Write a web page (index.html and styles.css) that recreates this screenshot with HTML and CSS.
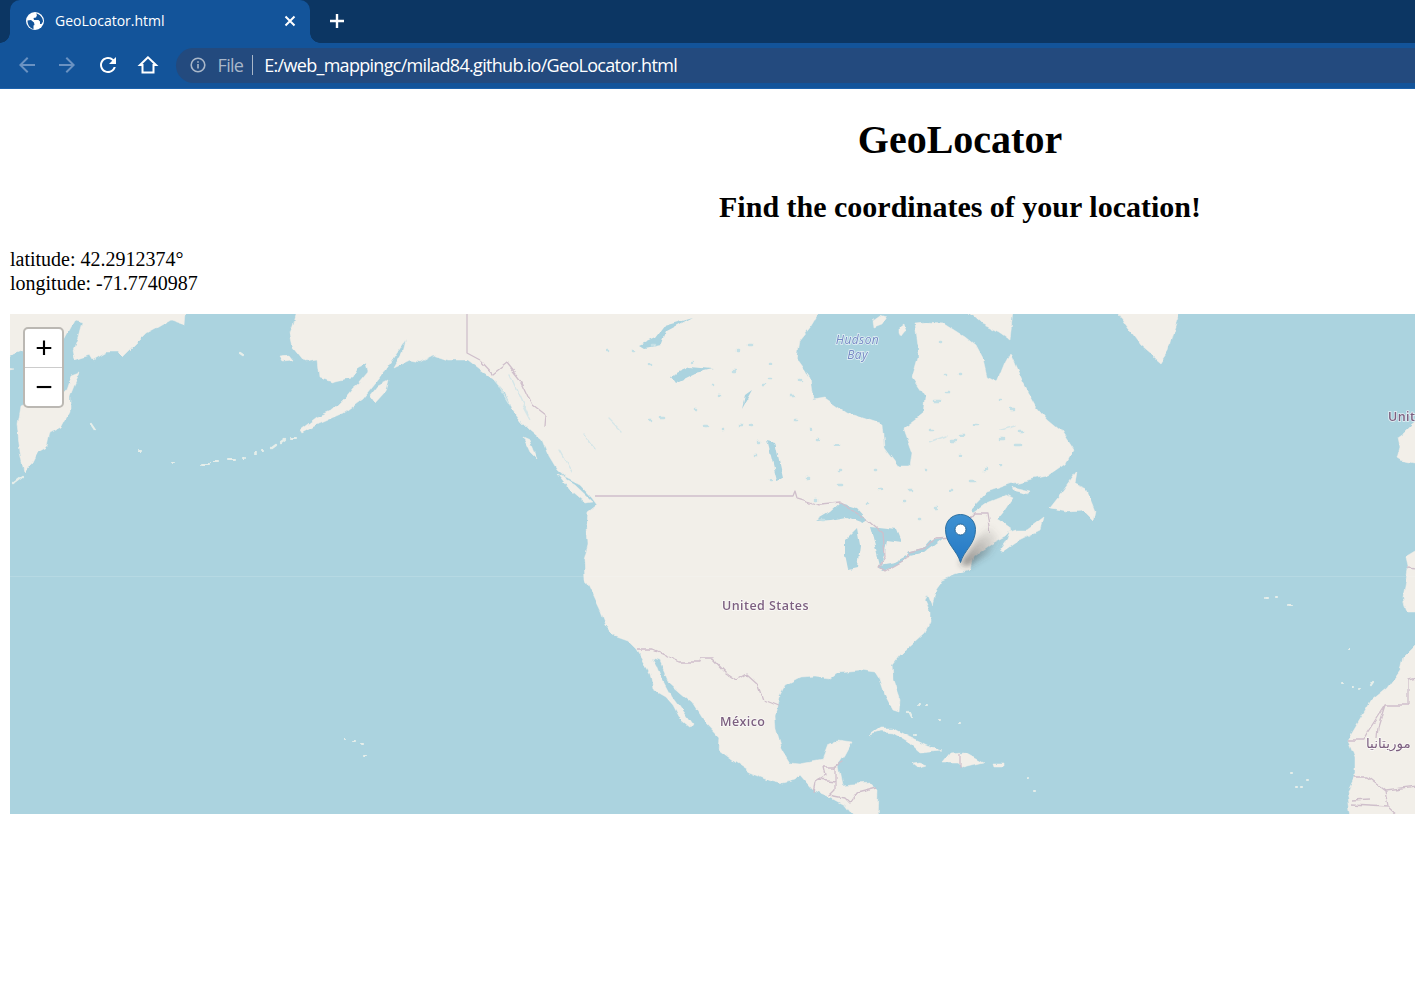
FILE: index.html
```html
<!DOCTYPE html>
<html lang="en">
<head>
  <meta charset="UTF-8">
  <meta name="viewport" content="width=device-width, initial-scale=1.0">
  <title>GeoLocator</title>
  <link rel="stylesheet" href="styles.css">
</head>
<body>

  <div class="browser">
    <div class="tabstrip">
      <div class="tab">
        <svg class="favicon" viewBox="0 0 18 18">
          <circle cx="9" cy="9" r="9" fill="#fff"/>
          <path class="favicon-land" d="M1.5 8.5 5 8l3 2.5.5 2.5-1 .5v3.5C4 16.5 1.5 13 1.5 8.5zM10 1.5l1 1.5-1 2.5-2.5.5L8 8h4.5l1.5 1.5v2.5h1.5L17 9.5c0-3.5-3-7.5-7-8z"/>
        </svg>
        <span class="tab-title">GeoLocator.html</span>
        <svg class="tab-close" viewBox="0 0 12 12"><path d="M1.5 1.5l9 9M10.5 1.5l-9 9"/></svg>
      </div>
      <svg class="new-tab" viewBox="0 0 16 16"><path d="M8 1v14M1 8h14"/></svg>
    </div>
    <div class="toolbar">
      <svg class="tool tool-off" viewBox="0 0 24 24"><path d="M20 11H7.8l5.6-5.6L12 4l-8 8 8 8 1.4-1.4L7.8 13H20z"/></svg>
      <svg class="tool tool-off" viewBox="0 0 24 24"><path d="M4 11h12.2l-5.6-5.6L12 4l8 8-8 8-1.4-1.4 5.6-5.6H4z"/></svg>
      <svg class="tool" viewBox="0 0 24 24"><path d="M17.65 6.35A7.958 7.958 0 0012 4c-4.42 0-7.99 3.58-7.99 8s3.57 8 7.99 8c3.73 0 6.84-2.55 7.73-6h-2.08A5.99 5.99 0 0112 18c-3.31 0-6-2.69-6-6s2.69-6 6-6c1.66 0 3.14.69 4.22 1.78L13 11h7V4l-2.35 2.35z"/></svg>
      <svg class="tool tool-line" viewBox="0 0 24 24"><path d="M12 4.3 4 12h2.5v7.5h11V12H20z"/></svg>
      <div class="omnibox">
        <svg class="info" viewBox="0 0 16 16">
          <circle cx="8" cy="8" r="6.8"/>
          <path d="M8 7v4.5M8 4.2v1.6"/>
        </svg>
        <span class="scheme">File</span>
        <span class="divider"></span>
        <span class="url">E:/web_mappingc/milad84.github.io/GeoLocator.html</span>
      </div>
    </div>
  </div>

  <main class="page">
    <div class="titles">
      <h1>GeoLocator</h1>
      <h2>Find the coordinates of your location!</h2>
    </div>

    <p class="coords">latitude: 42.2912374°<br>longitude: -71.7740987</p>

    <div class="map">
      <svg class="map-svg" viewBox="10 314 1405 500">
        <defs>
          <filter id="coast" filterUnits="userSpaceOnUse" x="0" y="295" width="1430" height="535" color-interpolation-filters="sRGB">
            <feTurbulence type="fractalNoise" baseFrequency="0.07" numOctaves="3" seed="7" result="noise"/>
            <feDisplacementMap in="SourceGraphic" in2="noise" scale="6" xChannelSelector="R" yChannelSelector="G"/>
            <feGaussianBlur stdDeviation="0.6"/>
          </filter>
          <filter id="soft" filterUnits="userSpaceOnUse" x="0" y="295" width="1430" height="535">
            <feGaussianBlur stdDeviation="0.45"/>
          </filter>
          <filter id="softer" x="-40%" y="-40%" width="180%" height="180%"><feGaussianBlur stdDeviation="3"/></filter>
          <linearGradient id="pin" x1="0" y1="0" x2="0" y2="1">
            <stop offset="0" stop-color="#3f92d2"/>
            <stop offset="1" stop-color="#2478c4"/>
          </linearGradient>
          <linearGradient id="pinshadow" x1="0" y1="1" x2="1" y2="0">
            <stop offset="0" stop-color="#333" stop-opacity=".6"/>
            <stop offset="1" stop-color="#666" stop-opacity="0"/>
          </linearGradient>
        </defs>

        <rect class="water" x="10" y="314" width="1405" height="500"/>

        <g filter="url(#coast)">
          <!-- asia -->
          <path class="land" d="M0 300H187L185 325 170 320 158 327 147 333 135 345 123 357 118 352 107 352 93 360 90 355 75 360 73 350 78 337 82 322 75 320 64 340 24 350 0 359Z"/>
          <path class="land" d="M67 390 72 375 80 372 74 385 70 395 70 412 62 427 50 433 47 447 38 452 33 462 24 473 20 453 17 423 20 405 30 400 45 395Z"/>
          <path class="land" d="M0 367 14 369 0 372Z"/>

          <!-- north america, hudson bay cut into the outline -->
          <path class="land" d="M300 300 293 325 290 333 293 347 305 362 318 360 320 378 332 382 340 380 352 378 358 368 366 364 368 372 358 384 353 388 345 398 333 410 317 417 300 430 302 433 320 423 343 413 363 398 380 377 393 358 405 340 402 352 393 368 410 360 420 362 433 355 448 360 467 360 480 370 492 378 505 393 513 410 522 422 530 430 542 440 548 455 557 470 566 478 580 485 592 498 597 505 588 512 587 525 588 545 584 560 585 580 593 597 600 612 605 625 613 635 627 640 637 650 643 660 650 672 653 690 665 697 672 705 680 720 690 728 692 725 683 712 672 697 663 680 657 665 653 658 660 660 670 683 680 692 693 703 705 722 720 738 719 750 735 762 750 772 770 780 783 783 795 780 800 775 813 790 830 797 845 805 860 825 877 825 878 790 870 783 853 784 842 785 838 765 845 755 852 742 838 740 828 745 822 760 800 764 790 763 782 750 776 730 775 715 779 697 785 685 800 677 815 676 830 678 838 672 860 670 875 672 880 680 885 695 893 710 899 712 900 700 893 680 892 665 900 655 913 643 925 632 930 622 930 612 925 600 928 595 932 605 936 590 943 580 955 575 970 570 973 557 990 545 1005 537 1012 530 1005 525 997 520 1005 510 1013 498 1007 495 987 503 973 513 970 510 987 492 1013 483 1047 476 1066 463 1073 450 1060 430 1048 420 1035 405 1023 383 1015 365 1010 353 1005 362 997 382 987 377 983 360 975 345 965 337 943 323 925 322 915 323 918 345 918 357 912 378 925 397 923 413 903 428 912 453 910 467 900 467 885 447 883 425 847 413 825 398 813 400 810 378 797 360 800 340 812 325 827 300Z"/>
          <path class="land" d="M955 300 980 323 1000 333 1010 340 1014 300Z"/>
          <path class="land" d="M873 320 880 315 887 317 882 325 874 328ZM900 327 904 324 906 332 902 337 900 333Z"/>
          <path class="land" d="M1108 300 1125 325 1140 345 1160 362 1168 350 1172 335 1184 300Z"/>
          <path class="land" d="M1000 550 1007 540 1010 532 1016 530 1027 530 1043 518 1040 530 1020 540 1003 552Z"/>
          <path class="land" d="M1050 508 1064 490 1077 472 1075 485 1087 490 1095 510 1093 520 1083 510 1067 511Z"/>
          <path class="land" d="M1013 487 1030 491 1028 494 1015 491Z"/>
          <path class="land" d="M523 437 530 440 538 460 530 452ZM558 475 575 485 593 502 585 503 570 490Z"/>
          <path class="land" d="M370 395 378 385 388 380 385 392 375 403ZM280 356 288 355 292 360 283 361Z"/>

          <!-- caribbean -->
          <path class="land" d="M870 735 880 728 893 728 910 737 927 745 942 750 920 752 910 743 893 733 880 732ZM942 763 950 753 965 752 983 762 963 767 957 763ZM913 764 920 763 927 766 918 768ZM993 763 1003 763 1003 766 994 766Z"/>

          <!-- europe, africa -->
          <path class="land" d="M1412 425 1425 415V465L1400 460 1397 458 1400 447 1398 437 1405 432Z"/>
          <path class="land" d="M1425 545 1405 557 1408 570 1403 597 1407 612H1425Z"/>
          <path class="land" d="M1425 635 1403 657 1400 670 1388 687 1372 700 1358 723 1348 740 1355 757 1355 773 1347 790 1352 825H1425Z"/>

          <!-- lakes -->
          <path class="lake" d="M815 521 830 512 840 503 857 508 868 520 863 523 847 517 830 520ZM845 540 857 528 860 545 857 568 848 570 845 555ZM870 527 897 530 902 542 887 540 885 553 880 565 875 545ZM878 565 895 562 908 555 905 560 890 568 882 571ZM907 552 923 548 930 540 945 537 925 552 910 556ZM767 440 775 442 783 478 777 480ZM670 376 690 367 713 369 695 373 675 383ZM640 345 655 338 665 325 693 317 665 332 660 345 645 348ZM745 395 752 390 742 408Z"/>
          <path class="rivers" d="M495 380l15 25M510 375l18 40M530 420l-8-15M585 435l10 14M610 420l12 12M560 450l12 22M1000 430l15-4M930 442l16-6"/>
          <path class="dots" d="M607 352h1M633 352h1M652 345h2M650 364h1M692 362h1M712 385h1M720 395h2M748 345h3M738 350h1M733 372h1M763 385h2M770 365h1M768 378h2M790 396h3M800 380h1M650 420h2M660 416h4M695 410h1M705 425h3M722 430h1M740 425h2M752 425h1M758 442h2M755 455h2M770 480h1M795 420h2M810 430h1M818 440h1M836 445h3M840 470h1M838 485h4M808 478h1M815 500h1M822 520h2M935 400h5M945 392h3M960 375h1M930 430h3M950 440h6M960 435h4M975 425h3M1000 440h4M1015 445h5M1020 432h3M985 470h1M970 480h5M950 490h2M1000 465h1M960 455h1M925 470h1M910 490h3M905 502h1M920 520h1M935 508h2M865 503h1M875 470h1M880 490h2M940 342h1M945 375h1M1000 400h1M1010 410h4"/>

          <!-- islands and island chains -->
          <path class="isles" d="M13 483l8-6M90 423l4 6M138 452h2M172 462h1M203 464h6M214 462h4M228 460h8M243 458h1M255 454h1M262 451h1M272 448l4-3M281 443l4-3M290 437h6M240 353l3 2M360 745h1M364 755h2M346 738h1M354 741h1M1265 598h2M1276 597h1M1288 606h3M1349 649h1M1342 683h1M1352 687h1M1359 689h1M1371 685l2-3M1291 773h1M1308 780h1M1302 787h1M1296 788h1M960 723h1M940 720h1M925 706h1M908 712l3 6M915 735h1M918 703h1M1028 778h1M1033 790h1"/>

          <!-- borders that follow the land -->
          <path class="border" d="M480 360 493 374 507 363 522 382 533 405 546 415 545 427"/>
          <path class="border" d="M797 498 820 505 840 503 868 520 883 533 885 557 878 567 885 571 908 558 910 552 925 548 935 538 955 537 975 513 987 513 990 533"/>
          <path class="border" d="M638 650H653L680 662H700L701 658H713L727 673 737 680 747 674 757 683 763 700 778 706"/>
          <path class="border" d="M823 767H835L843 762 835 767V782L818 780 825 776 823 767M818 780 815 782 813 792M835 782 835 790 830 795 845 798 850 803 857 793 877 788M960 753V767"/>
          <path class="border" d="M1348 740H1363L1367 733 1385 705H1408V680L1425 676M1385 705 1378 727 1377 738M1353 777H1368L1385 790 1425 785M1385 790 1388 807 1408 825M1352 800 1370 799M1352 805 1388 807M1407 567 1425 569"/>
        </g>

        <g filter="url(#soft)">
          <path class="border" d="M467 300V353L480 360M595 496H793L795 491 797 498"/>
          <rect class="seam" x="10" y="576" width="1405" height="1"/>
          <text class="label label-sea" x="857.5" y="344" text-anchor="middle">Hudson</text>
          <text class="label label-sea" x="857.5" y="359" text-anchor="middle">Bay</text>
          <text class="label label-us" x="722" y="610">United States</text>
          <text class="label" x="720" y="726">México</text>
          <text class="label" x="1388" y="421">Unit</text>
          <text class="label label-ar" x="1366" y="748">موريتانيا</text>
        </g>

        <!-- marker -->
        <path d="M960 564 976 540 990 527 999 538 988 554 968 566Z" fill="url(#pinshadow)" filter="url(#softer)"/>
        <path class="pin" d="M960.5 562.5C957 550 945.5 544 945.5 529.5C945.5 521 952 514.5 960.5 514.5C969 514.5 975.5 521 975.5 529.5C975.5 544 964 550 960.5 562.5Z"/>
        <circle class="pin-hole" cx="960.5" cy="529.5" r="5.5"/>
      </svg>

      <div class="zoom">
        <a class="zoom-btn" href="#">+</a>
        <a class="zoom-btn" href="#">−</a>
      </div>
    </div>
  </main>

</body>
</html>
```

FILE: styles.css
```css
* {
  box-sizing: border-box;
}

html,
body {
  margin: 0;
  padding: 0;
  background: #fff;
  overflow-x: hidden;
}

body {
  font-family: "Liberation Serif", "Times New Roman", serif;
  color: #000;
}

/* browser chrome */

.browser {
  height: 89px;
  background: #13549a;
  border-bottom: 1px solid #1d62ac;
  font-family: "Open Sans", "Noto Sans", sans-serif;
}

.tabstrip {
  height: 43px;
  background: #0c3663;
  display: flex;
  align-items: flex-end;
  padding-left: 10px;
}

.tab {
  position: relative;
  width: 300px;
  height: 43px;
  background: #13549a;
  border-radius: 10px 10px 0 0;
  display: flex;
  align-items: center;
  padding: 0 14px 2px 16px;
  color: #fff;
}

.tab::before,
.tab::after {
  content: "";
  position: absolute;
  bottom: 0;
  width: 10px;
  height: 10px;
}

.tab::before {
  left: -10px;
  background: radial-gradient(circle at 0 0, transparent 9.5px, #13549a 10px);
}

.tab::after {
  right: -10px;
  background: radial-gradient(circle at 100% 0, transparent 9.5px, #13549a 10px);
}

.favicon {
  width: 18px;
  height: 18px;
  flex: none;
}

.favicon-land {
  fill: #13549a;
}

.tab-title {
  flex: 1;
  margin-left: 11px;
  font-size: 14px;
}

.tab-close {
  width: 12px;
  height: 12px;
  margin-bottom: -1px;
  fill: none;
  stroke: #fff;
  stroke-width: 2;
}

.new-tab {
  width: 16px;
  height: 16px;
  margin: 0 0 14px 19px;
  fill: none;
  stroke: #fff;
  stroke-width: 2.4;
}

.toolbar {
  height: 45px;
  display: flex;
  align-items: center;
  padding: 0 0 1px 15px;
  gap: 16.4px;
}

.tool {
  width: 24px;
  height: 24px;
  flex: none;
  fill: #fff;
}

.tool-off {
  fill: #6a92c2;
}

.tool-line {
  fill: none;
  stroke: #fff;
  stroke-width: 2;
  stroke-linejoin: miter;
}

.omnibox {
  flex: 1;
  height: 35px;
  margin-left: -1px;
  background: #234a7e;
  border-radius: 18px 0 0 18px;
  display: flex;
  align-items: center;
  padding-left: 14px;
  font-size: 18px;
  letter-spacing: -0.7px;
}

.info {
  width: 16px;
  height: 16px;
  flex: none;
  fill: none;
  stroke: #a9b7c9;
  stroke-width: 1.6;
}

.scheme {
  margin-left: 12px;
  color: #a9b7c9;
}

.divider {
  width: 1px;
  height: 20px;
  margin: 0 11px 0 9px;
  background: #a9b7c9;
}

.url {
  color: #fff;
}

/* page */

.page {
  margin-left: 10px;
}

.titles {
  margin-left: 495px;
  text-align: center;
}

.titles h1 {
  margin: 28px 0 0;
  font-size: 40px;
  line-height: 46px;
}

.titles h2 {
  margin: 27px 0 0;
  font-size: 30px;
  line-height: 34px;
}

.coords {
  margin: 23px 0 0;
  font-size: 20px;
  line-height: 24px;
}

/* map */

.map {
  position: relative;
  height: 500px;
  margin-top: 19px;
  overflow: hidden;
  background: #aad3df;
}

.map-svg {
  display: block;
  width: 100%;
  height: 500px;
}

.water {
  fill: #abd3df;
}

.land {
  fill: #f2efe9;
  stroke: #f2efe9;
  stroke-width: 0.5;
  stroke-linejoin: round;
}

.lake {
  fill: #abd3df;
}

.rivers {
  fill: none;
  stroke: #d5e6e8;
  stroke-width: 1.4;
  stroke-linecap: round;
}

.dots {
  fill: none;
  stroke: #c4e0e6;
  stroke-width: 2.6;
  stroke-linecap: round;
}

.isles {
  fill: none;
  stroke: #e6eeea;
  stroke-width: 2.2;
  stroke-linecap: round;
}

.border {
  fill: none;
  stroke: #cfbfcb;
  stroke-width: 1.3;
  stroke-linejoin: round;
}

.seam {
  fill: #fff;
  opacity: 0.14;
}

.label {
  font-family: "Open Sans", "Noto Sans", sans-serif;
  font-size: 12.5px;
  font-weight: 600;
  letter-spacing: 0.4px;
  fill: #7d6080;
  stroke: #fff;
  stroke-width: 1.5px;
  stroke-opacity: 0.7;
  paint-order: stroke;
}

.label-us {
  letter-spacing: 0.45px;
}

.label-sea {
  font-size: 12px;
  font-weight: 400;
  font-style: italic;
  fill: #7489c4;
}

.label-ar {
  font-family: "DejaVu Sans", sans-serif;
  font-size: 13.5px;
  font-weight: 400;
  letter-spacing: 0;
}

.pin {
  fill: url(#pin);
  stroke: #2d6f9f;
  stroke-width: 1;
}

.pin-hole {
  fill: #fff;
  stroke: #2a6795;
  stroke-width: 1;
}

.zoom {
  position: absolute;
  top: 13px;
  left: 13px;
  width: 41px;
  border: 2px solid #bbb8b3;
  border-radius: 5px;
  background: #fff;
  background-clip: padding-box;
}

.zoom-btn {
  display: block;
  height: 38px;
  padding-left: 1px;
  text-align: center;
  font: 30px/38px "Liberation Sans", Arial, sans-serif;
  color: #000;
  text-decoration: none;
}

.zoom-btn:first-child {
  border-bottom: 1px solid #ccc;
  height: 39px;
}
```
